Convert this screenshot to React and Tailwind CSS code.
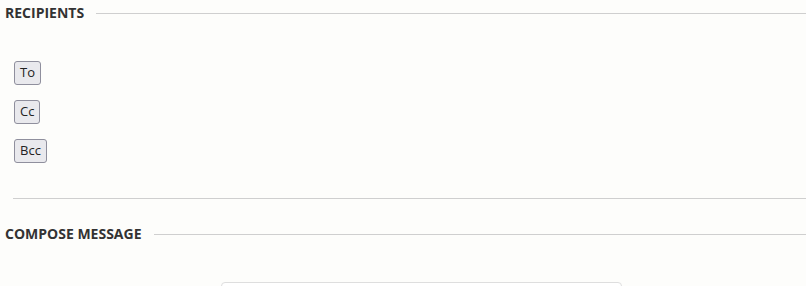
const fields = ['To', 'Cc', 'Bcc']

function SectionHeading({ label }) {
  return (
    <div className="flex items-center gap-3 pl-[5px] h-[26px]">
      <h2 className="text-[14px] leading-[26px] font-bold uppercase text-[#333] whitespace-nowrap">{label}</h2>
      <div className="flex-1 h-px bg-[#cfcfcf]" />
    </div>
  )
}

export default function App() {
  return (
    <div
      className="h-[286px] bg-[#fdfdfb] overflow-hidden"
      style={{ fontFamily: '"Open Sans", sans-serif' }}
    >
      <SectionHeading label="Recipients" />

      <div className="pl-[14px] pt-[35px] flex flex-col items-start gap-[15px]">
        {fields.map((f) => (
          <button
            key={f}
            className="h-6 px-[5px] text-[13px] text-[#222] bg-[#e9e9ed] border border-[#8f8f9d] rounded-[3px]"
          >
            {f}
          </button>
        ))}
      </div>

      <div className="ml-[13px] mt-[35px] h-px bg-[#cfcfcf]" />

      <div className="mt-[22px]">
        <SectionHeading label="Compose message" />
      </div>

      <div className="ml-[221px] mt-[35px] w-[401px] h-10 border border-[#dedede] rounded-[4px] bg-white" />
    </div>
  )
}
